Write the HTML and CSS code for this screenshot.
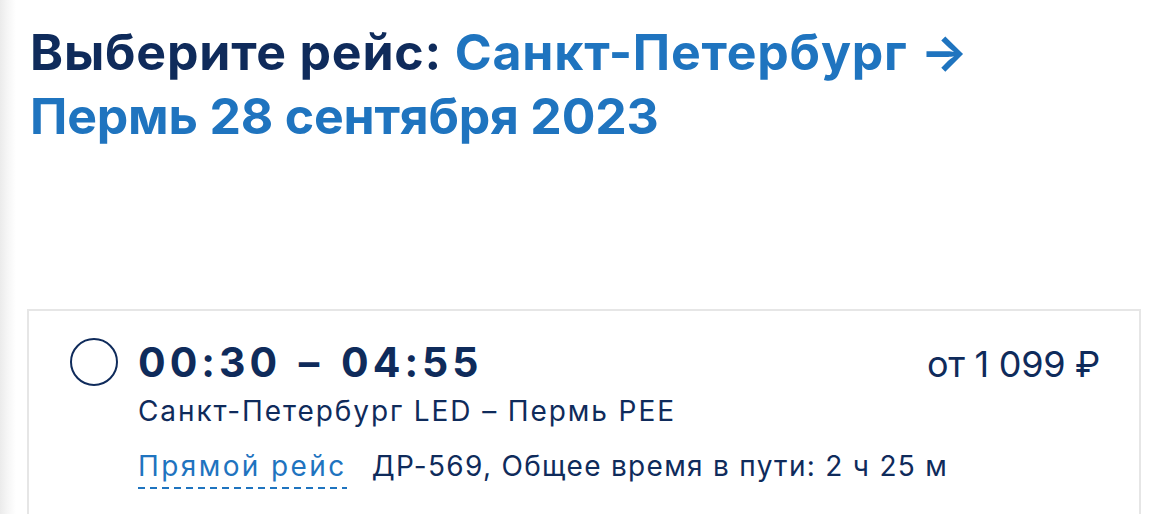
FILE: index.html
```html
<!DOCTYPE html>
<html lang="ru">
<head>
<meta charset="utf-8">
<link rel="stylesheet" href="styles.css">
</head>
<body>
<div class="page">
  <h1 class="title"><span class="dark">Выберите рейс:</span> Санкт-Петербург →<br><span class="second">Пермь 28 сентября 2023</span></h1>
  <div class="card">
    <div class="radio"></div>
    <div class="info">
      <div class="row-top">
        <div class="time">00:30 – 04:55</div>
        <div class="price">от 1 099 ₽</div>
      </div>
      <div class="route">Санкт-Петербург LED – Пермь PEE</div>
      <div class="meta"><span class="direct">Прямой рейс</span><span class="details">ДР-569, Общее время в пути: 2 ч 25 м</span></div>
    </div>
  </div>
</div>
</body>
</html>
```
FILE: styles.css
```css
html, body { margin: 0; padding: 0; }
body { font-family: Inter, "Noto Sans", sans-serif; color: #0f2b5b; background: #fff; }
.page {
  height: 514px;
  background: linear-gradient(to right, #ebebeb 0, #f5f5f5 7px, #fff 16px);
  padding: 20px 30px 0 27px;
  box-sizing: border-box;
  overflow: hidden;
}
.title {
  margin: 0 0 0 3px;
  font-size: 50px;
  font-weight: 700;
  line-height: 64px;
  color: #1f74bf;
  letter-spacing: 0.8px;
}
.title .dark { color: #0f2b5b; }
.title .second { letter-spacing: -0.2px; }
.card {
  margin-top: 161px;
  width: 1114px;
  box-sizing: border-box;
  border: 2px solid #e6e6e6;
  border-bottom: none;
  background: #fff;
  display: flex;
  padding: 25px 39px 30px 41px;
  height: 230px;
}
.radio {
  width: 48px;
  height: 48px;
  box-sizing: border-box;
  border: 2.5px solid #0f2b5b;
  border-radius: 50%;
  flex: none;
  margin-top: 2px;
  margin-right: 20px;
}
.info { flex: 1; }
.row-top { display: flex; justify-content: space-between; align-items: baseline; }
.time { font-size: 41px; font-weight: 700; line-height: 52px; letter-spacing: 4px; word-spacing: 4px; }
.price { font-size: 36px; font-weight: 400; letter-spacing: -0.3px; }
.route { font-size: 28px; line-height: 34px; margin-top: 6px; letter-spacing: 1.9px; }
.meta { font-size: 28px; line-height: 34px; margin-top: 21px; }
.direct {
  color: #1f74bf;
  letter-spacing: 2.4px;
  padding-bottom: 6px;
  margin-right: 25px;
  background-image: repeating-linear-gradient(to right, #1f74bf 0 7px, transparent 7px 12px);
  background-size: 100% 2px;
  background-position: left bottom;
  background-repeat: no-repeat;
}
.details { letter-spacing: 1.3px; }
```
